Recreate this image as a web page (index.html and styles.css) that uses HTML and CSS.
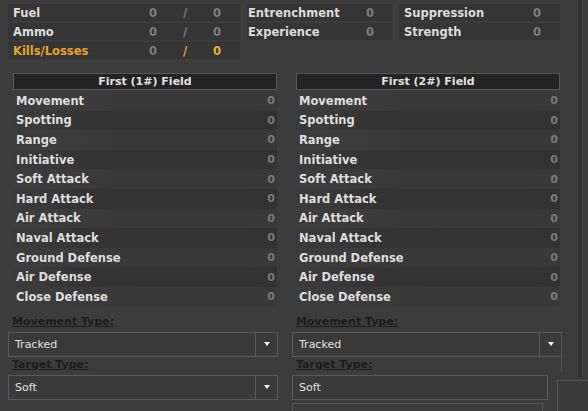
FILE: index.html
```html
<!DOCTYPE html>
<html lang="en">
<head>
  <meta charset="UTF-8">
  <title>Unit Stats</title>
  <link rel="stylesheet" href="styles.css">
</head>
<body>

  <div class="page">
    <div class="panel">

      <!-- Supply / combat summary -->
      <div class="summary">
        <div class="cell cell-wide">
          <span class="name">Fuel</span><span class="num">0</span><span class="num">/</span><span class="num">0</span>
        </div>
        <div class="cell cell-mid">
          <span class="name">Entrenchment</span><span class="num">0</span>
        </div>
        <div class="cell cell-right">
          <span class="name">Suppression</span><span class="num">0</span>
        </div>

        <div class="cell cell-wide">
          <span class="name">Ammo</span><span class="num">0</span><span class="num">/</span><span class="num">0</span>
        </div>
        <div class="cell cell-mid">
          <span class="name">Experience</span><span class="num">0</span>
        </div>
        <div class="cell cell-right">
          <span class="name">Strength</span><span class="num">0</span>
        </div>

        <div class="cell cell-wide kills">
          <span class="name">Kills/Losses</span><span class="num">0</span><span class="num">/</span><span class="num strong">0</span>
        </div>
      </div>

      <!-- Two weapon fields -->
      <div class="fields">
        <div class="field">
          <div class="field-head">First (1#) Field</div>
          <div class="stat"><span>Movement</span><span class="val">0</span></div>
          <div class="stat"><span>Spotting</span><span class="val">0</span></div>
          <div class="stat"><span>Range</span><span class="val">0</span></div>
          <div class="stat"><span>Initiative</span><span class="val">0</span></div>
          <div class="stat"><span>Soft Attack</span><span class="val">0</span></div>
          <div class="stat"><span>Hard Attack</span><span class="val">0</span></div>
          <div class="stat"><span>Air Attack</span><span class="val">0</span></div>
          <div class="stat"><span>Naval Attack</span><span class="val">0</span></div>
          <div class="stat"><span>Ground Defense</span><span class="val">0</span></div>
          <div class="stat"><span>Air Defense</span><span class="val">0</span></div>
          <div class="stat"><span>Close Defense</span><span class="val">0</span></div>
        </div>

        <div class="field">
          <div class="field-head">First (2#) Field</div>
          <div class="stat"><span>Movement</span><span class="val">0</span></div>
          <div class="stat"><span>Spotting</span><span class="val">0</span></div>
          <div class="stat"><span>Range</span><span class="val">0</span></div>
          <div class="stat"><span>Initiative</span><span class="val">0</span></div>
          <div class="stat"><span>Soft Attack</span><span class="val">0</span></div>
          <div class="stat"><span>Hard Attack</span><span class="val">0</span></div>
          <div class="stat"><span>Air Attack</span><span class="val">0</span></div>
          <div class="stat"><span>Naval Attack</span><span class="val">0</span></div>
          <div class="stat"><span>Ground Defense</span><span class="val">0</span></div>
          <div class="stat"><span>Air Defense</span><span class="val">0</span></div>
          <div class="stat"><span>Close Defense</span><span class="val">0</span></div>
        </div>
      </div>

      <!-- Type selectors -->
      <div class="types">
        <div class="type-col">
          <div class="type-label">Movement Type:</div>
          <div class="combo"><span class="combo-text">Tracked</span><span class="combo-btn"><i class="arrow"></i></span></div>
          <div class="type-label">Target Type:</div>
          <div class="combo"><span class="combo-text">Soft</span><span class="combo-btn"><i class="arrow"></i></span></div>
        </div>

        <div class="type-col">
          <div class="type-label">Movement Type:</div>
          <div class="combo"><span class="combo-text">Tracked</span><span class="combo-btn"><i class="arrow"></i></span></div>
          <div class="type-label edge">Target Type:</div>
          <div class="combo combo-cut"><span class="combo-text">Soft</span></div>
          <div class="combo-ghost"></div>
        </div>
      </div>

    </div>
    <div class="scroll-edge"></div>
  </div>

  <div class="corner-box"></div>

</body>
</html>
```

FILE: styles.css
```css
body {
  margin: 0;
  background: #3c3c3c;
  font-family: 'DejaVu Sans', 'Verdana', sans-serif;
  color: #dcdcdc;
  width: 588px;
  height: 411px;
  overflow: hidden;
  position: relative;
}

.page {
  display: flex;
}

.panel {
  width: 578px;
}

.scroll-edge {
  width: 4px;
  height: 377px;
  background: #323232;
  border-right: 1px solid #454545;
}

/* summary block */
.summary {
  display: grid;
  grid-template-columns: 232px 145px 161px;
  grid-auto-rows: 17px;
  column-gap: 7px;
  row-gap: 2px;
  padding: 4px 0 0 8px;
}

.cell {
  display: flex;
  align-items: center;
  background: #353535;
  font-size: 11.5px;
  font-weight: bold;
}

.cell .name {
  flex: 1;
}

.cell .num {
  width: 20px;
  text-align: center;
  color: #7e7e7e;
}

.cell-wide {
  padding: 0 13px 0 5px;
}

.cell-wide .num + .num {
  margin-left: 12px;
}

.cell-mid {
  padding: 0 12px 0 1px;
}

.cell-right {
  padding: 0 13px 0 5px;
}

.kills .name,
.kills .num + .num {
  color: #e8a42a;
}

.kills .num.strong {
  color: #f0b030;
}

/* fields */
.fields {
  display: grid;
  grid-template-columns: 264px 264px;
  column-gap: 19px;
  padding: 14px 0 0 13px;
}

.field-head {
  height: 15px;
  line-height: 15px;
  border: 1px solid #575757;
  background: #242424;
  text-align: center;
  font-size: 11px;
  font-weight: bold;
  color: #e0e0e0;
  margin-bottom: 1px;
}

.stat {
  display: flex;
  align-items: center;
  justify-content: space-between;
  height: 19.6px;
  padding: 0 2px 0 3px;
  font-size: 11.5px;
  font-weight: bold;
  color: #dedede;
  background: linear-gradient(to right, rgba(0,0,0,0) 15%, rgba(0,0,0,0.05) 40%, rgba(0,0,0,0.06) 100%);
}

.stat:nth-of-type(odd) {
  background: linear-gradient(to right, rgba(0,0,0,0.03) 10%, rgba(0,0,0,0.14) 25%, rgba(0,0,0,0.16) 100%);
}

.stat .val {
  color: #7a7a7a;
  font-size: 11px;
}

/* selectors */
.types {
  display: grid;
  grid-template-columns: 270px 270px;
  column-gap: 14px;
  padding: 8px 0 0 8px;
}

.type-label {
  height: 14px;
  line-height: 14px;
  padding-left: 4px;
  font-size: 11px;
  font-weight: bold;
  color: #1c1c1c;
  text-decoration: underline;
}

.type-label + .combo {
  margin-top: 3px;
}

.type-label.edge {
  border-right: 1px solid #555;
  margin-bottom: 2px;
}

.combo {
  display: flex;
  height: 23px;
  border: 1px solid #5a5a5a;
  background: #3a3a3a;
  font-size: 11px;
  color: #e2e2e2;
}

.combo + .type-label {
  margin-top: 1px;
}

.combo-text {
  flex: 1;
  line-height: 23px;
  padding-left: 6px;
}

.combo-btn {
  width: 21px;
  border-left: 1px solid #5a5a5a;
  display: flex;
  align-items: center;
  justify-content: center;
}

.arrow {
  width: 0;
  height: 0;
  border-left: 3px solid transparent;
  border-right: 3px solid transparent;
  border-top: 4px solid #f2f2f2;
}

.combo-cut {
  width: 254px;
}

.combo-ghost {
  width: 249px;
  height: 12px;
  margin-top: 3px;
  border: 1px solid #555;
  border-bottom: none;
}

.corner-box {
  position: absolute;
  left: 557px;
  top: 380px;
  width: 31px;
  height: 31px;
  border-top: 1px solid #555;
  border-left: 1px solid #555;
  background: #3a3a3a;
}
```
